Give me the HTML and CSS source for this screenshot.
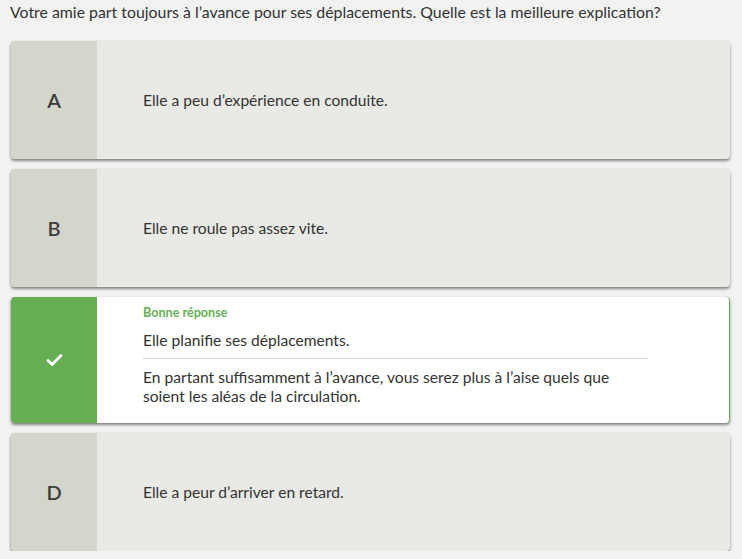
FILE: index.html
```html
<!DOCTYPE html>
<html lang="fr">
<head>
<meta charset="utf-8">
<link rel="stylesheet" href="styles.css">
</head>
<body>
<div class="quiz">
  <p class="question">Votre amie part toujours à l’avance pour ses déplacements. Quelle est la meilleure explication?</p>
  <div class="answers">
    <div class="card">
      <div class="letter">A</div>
      <div class="content"><p class="answer">Elle a peu d’expérience en conduite.</p></div>
    </div>
    <div class="card">
      <div class="letter">B</div>
      <div class="content"><p class="answer">Elle ne roule pas assez vite.</p></div>
    </div>
    <div class="card correct">
      <div class="letter">
        <svg width="17" height="14" viewBox="0 0 17 14"><path d="M2 7.5 L6.2 11.5 L15 2.5" fill="none" stroke="#fff" stroke-width="2.8" stroke-linecap="round" stroke-linejoin="round"/></svg>
      </div>
      <div class="content">
        <p class="label">Bonne réponse</p>
        <p class="answer">Elle planifie ses déplacements.</p>
        <hr class="divider">
        <p class="explanation">En partant suffisamment à l’avance, vous serez plus à l’aise quels que soient les aléas de la circulation.</p>
      </div>
    </div>
    <div class="card">
      <div class="letter">D</div>
      <div class="content"><p class="answer">Elle a peur d’arriver en retard.</p></div>
    </div>
  </div>
</div>
</body>
</html>
```
FILE: styles.css
```css
html, body {
  margin: 0;
  padding: 0;
  background: #f2f2f2;
}
body {
  font-family: Lato, "Open Sans", sans-serif;
  color: #333;
}
.quiz {
  padding: 3px 12px 0 11px;
}
.question {
  margin: 0 0 0 -1px;
  font-size: 15.85px;
  line-height: 18px;
  color: #333;
}
.answers {
  margin-top: 20px;
  display: flex;
  flex-direction: column;
  gap: 10px;
}
.card {
  display: flex;
  min-height: 118px;
  background: #e9eae6;
  border-radius: 4px;
  overflow: hidden;
  box-shadow: 0 2px 3px rgba(0,0,0,0.45), -1px 0 2px rgba(0,0,0,0.08);
}
.letter {
  width: 86px;
  flex: none;
  background: #d4d6cc;
  display: flex;
  align-items: center;
  justify-content: center;
  font-size: 20px;
  font-weight: 600;
  color: #3d3d3d;
}
.content {
  flex: 1;
  padding: 0 81px 0 46px;
  display: flex;
  flex-direction: column;
  justify-content: center;
}
.answer {
  margin: 0;
  font-size: 15.6px;
  line-height: 20px;
  color: #333;
}
.correct {
  background: #fff;
  border-right: 1px solid #6ab359;
}
.correct .letter {
  background: #65ae53;
}
.correct .content {
  justify-content: flex-start;
  padding-top: 8px;
  padding-bottom: 17px;
}
.label {
  margin: 0;
  font-size: 12.6px;
  line-height: 16px;
  font-weight: 700;
  color: #66b155;
}
.correct .answer {
  margin-top: 9px;
}
.divider {
  margin: 8px 0 0;
  border: 0;
  border-top: 1px solid #d4d6cc;
  height: 0;
}
.explanation {
  margin: 9px 0 0;
  font-size: 15.6px;
  line-height: 19px;
  color: #333;
}
```
